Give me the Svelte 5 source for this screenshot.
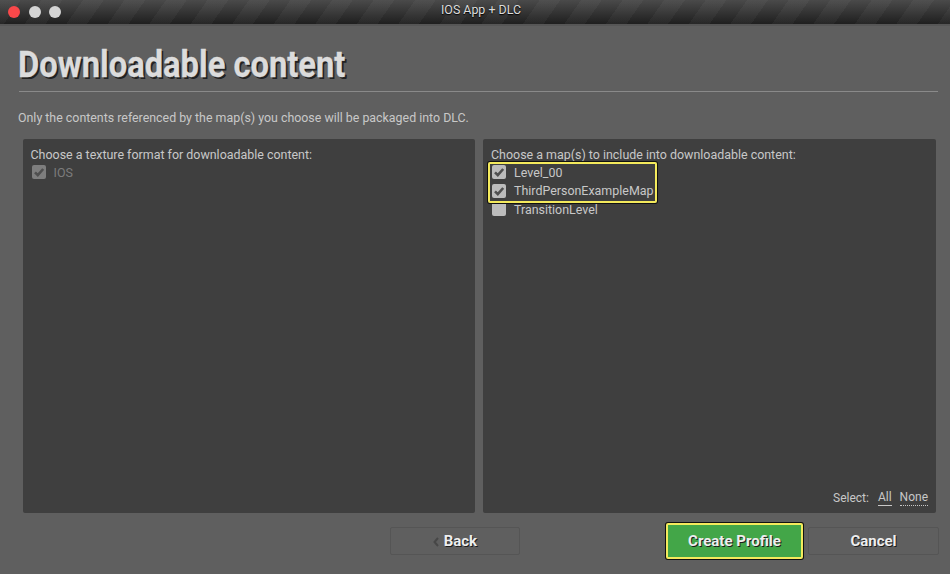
<script>
    const maps = [
        { name: "Level_00", checked: true },
        { name: "ThirdPersonExampleMap", checked: true },
        { name: "TransitionLevel", checked: false },
    ];
</script>

<main class="window">
    <header class="titlebar">
        <div class="lights">
            <span class="light close"></span>
            <span class="light"></span>
            <span class="light"></span>
        </div>
        <span class="title">IOS App + DLC</span>
    </header>

    <section class="content">
        <h1>Downloadable content</h1>
        <div class="rule"></div>
        <p class="intro">Only the contents referenced by the map(s) you choose will be packaged into DLC.</p>

        <div class="panels">
            <div class="panel first">
                <div class="label">Choose a texture format for downloadable content:</div>
                <div class="row disabled">
                    <span class="box">{@render tick()}</span>
                    <span>IOS</span>
                </div>
            </div>
            <div class="panel">
                <div class="label">Choose a map(s) to include into downloadable content:</div>
                <div class="maps">
                    <div class="highlight"></div>
                    {#each maps as map}
                        <div class="row">
                            <span class="box">{#if map.checked}{@render tick()}{/if}</span>
                            <span>{map.name}</span>
                        </div>
                    {/each}
                </div>
                <div class="select">
                    <span>Select:</span>
                    <span class="link solid">All</span>
                    <span class="link">None</span>
                </div>
            </div>
        </div>

        <footer class="actions">
            <button class="btn back">
                <svg class="chev" viewBox="0 0 6 10" width="6" height="10">
                    <path d="M5 1 L1.5 5 L5 9" fill="none" stroke="#474747" stroke-width="2" />
                </svg>
                Back
            </button>
            <button class="btn create">Create Profile</button>
            <button class="btn cancel">Cancel</button>
        </footer>
    </section>
</main>

{#snippet tick()}
    <svg viewBox="0 0 14 14" width="14" height="14">
        <path d="M3 7.4 L5.8 10.2 L11.2 4" fill="none" stroke="#4f4f4f" stroke-width="2.6" />
    </svg>
{/snippet}

<style>
    :global(body) {
        margin: 0;
        background: #5f5f5f;
    }

    .window {
        width: 950px;
        height: 574px;
        display: flex;
        flex-direction: column;
        font-family: Roboto, "Liberation Sans", sans-serif;
        background: #5f5f5f;
        overflow: hidden;
    }

    .titlebar {
        position: relative;
        height: 24px;
        flex: none;
        display: flex;
        align-items: center;
        justify-content: center;
        background:
            repeating-linear-gradient(125deg, rgba(255, 255, 255, 0.035) 0 17px, rgba(255, 255, 255, 0) 17px 34px),
            linear-gradient(#4a4a4a, #1f1f1f);
        border-bottom: 2px solid #565656;
    }

    .lights {
        position: absolute;
        left: 8px;
        top: 6px;
        display: flex;
        gap: 8.5px;
    }

    .light {
        width: 12px;
        height: 12px;
        border-radius: 50%;
        background: #d4d4d4;
    }

    .light.close {
        background: #f9484a;
    }

    .title {
        font-size: 12.4px;
        color: #dcdcdc;
        position: relative;
        top: -3px;
        left: 6px;
        text-shadow: 0 1px 1px #000;
    }

    .content {
        flex: 1;
        display: flex;
        flex-direction: column;
        padding: 0 12px 0 18px;
        min-height: 0;
    }

    h1 {
        margin: 14px 0 0;
        height: 51px;
        line-height: 49px;
        font-size: 37px;
        font-weight: 700;
        color: #dcdcdc;
        white-space: nowrap;
        transform: scaleX(0.884);
        transform-origin: left center;
        text-shadow: 2px 2px 0 #222;
        -webkit-text-stroke: 0.3px #dcdcdc;
    }

    .rule {
        height: 1px;
        background: #8a8a8a;
        margin-left: 1px;
    }

    .intro {
        margin: 18px 0 0;
        font-size: 12.4px;
        line-height: 16px;
        color: #c8c8c8;
    }

    .panels {
        display: grid;
        grid-template-columns: 452px 1fr;
        gap: 8px;
        margin: 13px 2px 0 5px;
        height: 374px;
    }

    .panel {
        position: relative;
        background: #3f3f3f;
        border-radius: 2px;
        padding: 7px 8px;
        font-size: 12.45px;
        color: #c8c8c8;
    }

    .panel.first {
        padding-left: 7.5px;
    }

    .label {
        line-height: 17px;
    }

    .maps {
        position: relative;
    }

    .highlight {
        position: absolute;
        left: -3px;
        top: -1px;
        width: 169px;
        height: 41px;
        border: 2px solid #f4ea5c;
        border-radius: 2px;
        box-shadow: 0 0 0 1px #111;
        box-sizing: border-box;
    }

    .row {
        display: flex;
        align-items: center;
        gap: 8px;
        height: 18.5px;
    }

    .box {
        width: 14px;
        height: 14px;
        margin-left: 1px;
        background: #bcbcbc;
        border-radius: 2px;
        flex: none;
    }

    .box svg {
        display: block;
    }

    .disabled {
        color: #7c7c7c;
    }

    .disabled .box {
        background: #7e7e7e;
    }

    .select {
        position: absolute;
        right: 8px;
        bottom: 7px;
        display: flex;
        gap: 8px;
        font-size: 12px;
        line-height: 16px;
    }

    .link {
        border-bottom: 1px dotted #c8c8c8;
        line-height: 14px;
    }

    .link.solid {
        border-bottom-style: solid;
        margin-left: 1px;
    }

    .actions {
        display: flex;
        align-items: center;
        margin: 10px 0 0 372px;
    }

    .btn {
        flex: none;
        height: 28px;
        box-sizing: border-box;
        font-family: inherit;
        font-size: 15px;
        font-weight: 700;
        color: #eee;
        background: #5f5f5f;
        border: 1px solid #555;
        border-radius: 2px;
        text-shadow: 1px 1px 0 #1c1c1c;
        padding: 0;
    }

    .back {
        width: 130px;
    }

    .chev {
        margin-right: 1px;
        vertical-align: -1px;
    }

    .create {
        width: 137px;
        height: 36px;
        margin-left: 146px;
        background: #43a648;
        border: 2px solid #f4ea5c;
        box-shadow: 0 0 0 1px #111;
    }

    .cancel {
        width: 131px;
        margin-left: 5px;
    }
</style>
